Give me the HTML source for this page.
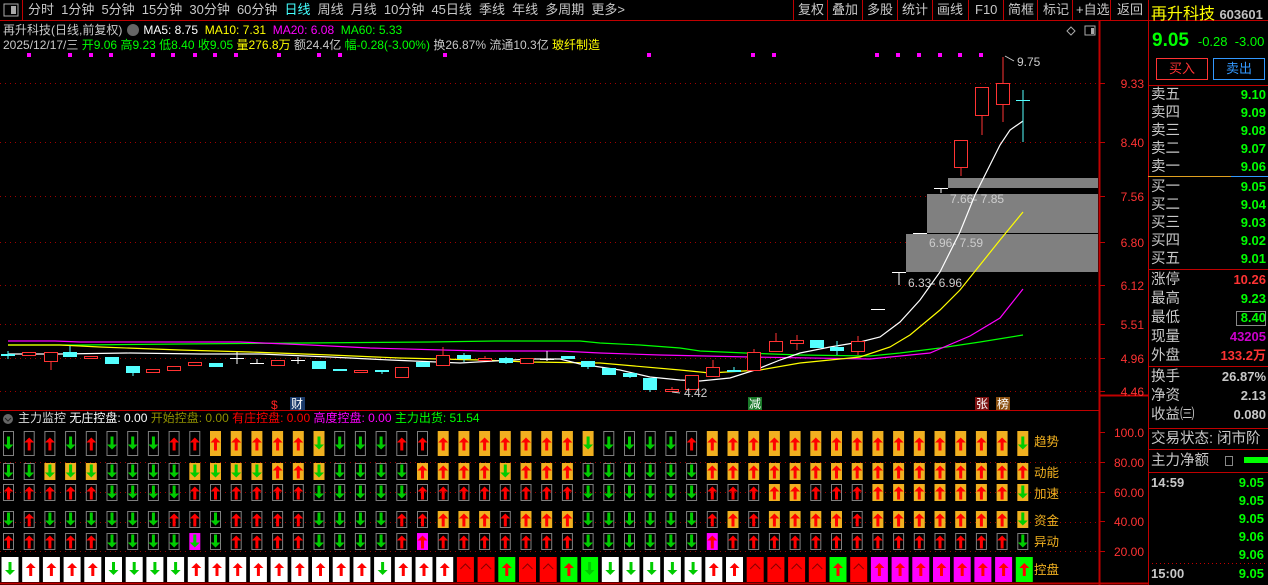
<!DOCTYPE html>
<html><head><meta charset="utf-8">
<style>
*{margin:0;padding:0;box-sizing:border-box}
body{width:1268px;height:585px;background:#000;overflow:hidden;font-family:"Liberation Sans","Noto Sans CJK SC",sans-serif;color:#c0c0c0;position:relative}
.t{position:absolute;white-space:nowrap;font-size:12px;line-height:14px}
.tb{position:absolute;top:0;height:20px;line-height:20px;font-size:13px;color:#c8c8c8;white-space:nowrap}
.rp{position:absolute;font-size:14.5px;line-height:18px;white-space:nowrap}
</style></head><body>
<svg id="s" width="1268" height="585" style="position:absolute;left:0;top:0"></svg>

<div class="tb" style="left:28px;word-spacing:3.5px">分时 1分钟 5分钟 15分钟 30分钟 60分钟 <span style="color:#4ff">日线</span> 周线 月线 10分钟 45日线 季线 年线 多周期 更多&gt;</div>
<div class="tb" style="left:798px">复权</div>
<div class="tb" style="left:832px">叠加</div>
<div class="tb" style="left:867px">多股</div>
<div class="tb" style="left:902px">统计</div>
<div class="tb" style="left:937px">画线</div>
<div class="tb" style="left:975px">F10</div>
<div class="tb" style="left:1008px">简框</div>
<div class="tb" style="left:1043px">标记</div>
<div class="tb" style="left:1076px">+自选</div>
<div class="tb" style="left:1117px">返回</div>

<div class="t" style="left:3px;top:23px;color:#c8c8c8">再升科技(日线,前复权)<span style="display:inline-block;width:12px;height:12px;border-radius:6px;background:#666;margin:0 4px 0 5px;vertical-align:-2px"></span><span style="color:#fff">MA5: 8.75</span>&nbsp; <span style="color:#ff0">MA10: 7.31</span>&nbsp; <span style="color:#f0f">MA20: 6.08</span>&nbsp; <span style="color:#0f0">MA60: 5.33</span></div>
<div class="t" style="left:3px;top:38px;color:#c8c8c8">2025/12/17/三 <span style="color:#0f0">开9.06</span> <span style="color:#0f0">高9.23</span> <span style="color:#0f0">低8.40</span> <span style="color:#0f0">收9.05</span> <span style="color:#ff0">量276.8万</span> 额24.4亿 <span style="color:#0f0">幅-0.28(-3.00%)</span> 换26.87% 流通10.3亿 <span style="color:#ff0">玻纤制造</span></div>

<div class="t" style="left:18px;top:411px;color:#ddd">主力监控 <span style="color:#fff">无庄控盘: 0.00</span> <span style="color:#909000">开始控盘: 0.00</span> <span style="color:#f00">有庄控盘: 0.00</span> <span style="color:#f0f">高度控盘: 0.00</span> <span style="color:#0f0">主力出货: 51.54</span></div>

<div class="rp" style="left:1151px;top:6px;font-size:16px;color:#ff0">再升科技 <span style="font-size:13px;color:#c0c0c0;font-weight:bold">603601</span></div>
<div class="rp" style="left:1152px;top:32px;font-size:19px;font-weight:bold;color:#0f0">9.05 <span style="font-size:13px;font-weight:normal">&nbsp;-0.28 &nbsp;-3.00</span></div>
<div style="position:absolute;left:1156px;top:58px;width:52px;height:22px;border:1px solid #f33;color:#f33;font-size:13px;text-align:center;line-height:20px">买入</div>
<div style="position:absolute;left:1213px;top:58px;width:52px;height:22px;border:1px solid #39f;color:#39f;font-size:13px;text-align:center;line-height:20px">卖出</div>
<div id="rp"></div>

<script>
const S=document.getElementById('s');let h='';
const L=(x1,y1,x2,y2,c,w,d)=>h+=`<line x1="${x1}" y1="${y1}" x2="${x2}" y2="${y2}" stroke="${c}" stroke-width="${w||1}" ${d?'stroke-dasharray="'+d+'"':''}/>`;
const R=(x,y,w,hh,f,s)=>h+=`<rect x="${x}" y="${y}" width="${w}" height="${hh}" fill="${f}" ${s?'stroke="'+s+'"':''}/>`;
const T=(x,y,t,c,fs,a)=>h+=`<text x="${x}" y="${y}" fill="${c}" font-size="${fs||12}" font-family="Liberation Sans,Noto Sans CJK SC,sans-serif" ${a?'text-anchor="'+a+'"':''}>${t}</text>`;
const red='#c00000';
L(0,20.5,1268,20.5,red);L(22.5,0,22.5,20,red);
[793,827,862,897,932,968,1003,1037,1072,1110].forEach(x=>L(x+.5,0,x+.5,20,red));
L(1099.5,20,1099.5,585,red,2);L(1148.5,0,1148.5,585,red);
L(0,410.5,1100,410.5,red);L(1100,395.5,1148,395.5,red,2);
L(0,583.5,1148,583.5,red,2);
[83,142,196,242,285,324,358,391].forEach(y=>{L(0,y+.5,1098,y+.5,'#a00000',1,'1 4');L(1100,y+.5,1105,y+.5,red)});
[['9.33',83],['8.40',142],['7.56',196],['6.80',242],['6.12',285],['5.51',324],['4.96',358],['4.46',391]].forEach(a=>T(1144,a[1]+5,a[0],'#f33',12,'end'));
[[100.0,432],[80,462],[60,492],[40,521],[20,551]].forEach(a=>{L(1100,a[1]+.5,1105,a[1]+.5,red);T(1144,a[1]+5,a[0]==100?'100.0':a[0]+'.00','#f33',12,'end')});
[462,492,522,551].forEach(y=>L(0,y+.5,1098,y+.5,'#a00000',1,'1 4'));
R(4,4,14,12,'none','#aaa');R(11,6,5,8,'#aaa');
h+=`<path d="M1071 27 l4 4 l-4 4 l-4 -4z" fill="none" stroke="#aaa"/>`;R(1085,26,10,9,'none','#aaa');R(1091,28,3,6,'#aaa');
[29,70,91,111,153,173,195,215,236,279,319,340,445,649,753,774,877,898,919,940,960,981].forEach(x=>R(x-2,53,4,4,'#f0f'));
R(948,178,150,10,'#808080');R(927,194,171,39,'#808080');R(906,234,192,38,'#808080');
L(906,233.5,1098,233.5,'#000');
T(950,203,'7.66- 7.85','#ccc',12);T(929,247,'6.96- 7.59','#ccc',12);T(908,287,'6.33- 6.96','#ccc',12);
const P=(pts,c)=>h+=`<polyline points="${pts}" fill="none" stroke="${c}" stroke-width="1.2"/>`;
P('8,345 80,345 180,344 430,342 495,341 580,341 600,343 640,345 680,348 700,351 745,353 800,355 870,356 900,353 940,348 980,342 1023,335','#0f0');
P('8,341 55,341 80,342 240,342 310,345 370,348 480,351 560,351 600,353 660,355 750,357 870,359 930,353 970,336 1000,318 1023,289','#f0f');
P('8,345 60,345 100,347 180,350 250,352 330,355 400,358 480,360 530,362 600,363 680,370 710,373 760,370 800,363 860,357 890,347 910,335 940,310 960,290 980,265 1000,240 1023,212','#ff0');
P('8,354 60,354 130,353 200,354 260,354 330,357 390,360 460,363 530,359 560,359 580,364 620,370 650,377 680,380 700,381 730,378 755,370 780,360 800,353 830,347 860,342 880,337 900,322 920,300 940,272 960,232 975,195 990,165 1000,145 1010,130 1023,121','#fff');
const C=[['c',8,354,354,351,359],['r',29,352,355,352,355],['r',51,352,361,352,370],['c',70,352,357,346,357],['r',91,356,358,356,358],['c',112,357,364,357,364],['c',133,366,373,366,376],['r',153,369,372,369,372],['r',174,366,370,366,370],['r',195,362,365,362,365],['c',216,363,367,363,367],['w',237,358,358,352,364],['w',257,363,363,359,364],['r',278,360,365,360,365],['w',298,360,360,357,364],['c',319,361,369,361,369],['c',340,369,371,369,371],['r',361,370,372,370,372],['c',382,370,372,370,374],['r',402,367,377,367,377],['c',423,362,367,362,367],['r',443,355,365,347,365],['c',464,355,359,353,362],['r',485,358,360,356,360],['c',506,358,363,357,364],['r',527,358,363,358,363],['w',547,359,359,351,361],['c',568,356,359,356,359],['c',588,361,367,361,369],['c',609,368,375,368,375],['c',630,373,377,373,378],['c',650,378,390,378,392],['r',672,389,391,387,391],['r',692,375,389,375,389],['r',713,367,376,360,376],['c',734,370,371,367,371],['r',754,352,370,349,370],['r',776,341,351,333,351],['r',797,340,343,335,350],['c',817,340,348,340,348],['c',837,347,351,341,355],['r',858,341,351,336,355],['w',878,309,309,309,309],['w',899,272,272,272,285],['w',920,233,233,233,233],['w',941,188,188,188,193],['r',961,140,167,140,176],['r',982,87,115,87,135],['r',1003,83,104,57,122],['q',1023,100,100,90,142]];
C.forEach(([t,x,a,b,hi,lo])=>{
 if(t=='r'){L(x,hi,x,a,'#f33');L(x,b,x,lo,'#f33');R(x-6.5,a+.5,13,Math.max(b-a,1),'#000','#f33');}
 else if(t=='c'){L(x,hi,x,lo,'#54ffff');R(x-7,a,14,Math.max(b-a,2),'#54ffff');}
 else if(t=='q'){L(x,hi,x,lo,'#54ffff');L(x-7,a+.5,x+7,a+.5,'#54ffff');}
 else {L(x,hi,x,lo,'#fff');L(x-7,a+.5,x+7,a+.5,'#fff');}
});
L(672,392,680,393,'#ccc');T(684,397,'4.42','#ccc',12);
L(1005,56,1014,61,'#ccc');T(1017,66,'9.75','#ccc',12);
T(271,409,'$','#f22',12);R(290,397,15,13,'#1a3a6a');T(291,408,'财','#fff',12);
R(748,397,14,13,'#1a7a2a');T(749,408,'减','#fff',12);
R(975,397,14,13,'#7a1010');T(976,408,'张','#fff',12);R(996,397,14,13,'#8a5010');T(997,408,'榜','#fff',12);
h+=`<circle cx="8" cy="419" r="5" fill="#666"/><path d="M5 418 l3 3 l3 -3" stroke="#222" fill="none"/>`;
const rs=[['duududdduu'+'UUUUUDdddu'+'uUUUUUUUDd'+'ddduUUUUUU'+'UUUUUUUUUD',431,25],
['ddDDDddddD'+'DDDUUDdddd'+'UUUUDUUUdd'+'ddddUUUUUU'+'UUUUUUUUUU',463,17],
['uuuuuddddu'+'uuuuuddddd'+'uuuuuuuudd'+'dddduuuUUu'+'uuUUUUUUUD',484,17],
['dudddddduu'+'duuuuddddu'+'uUUUuUUUdd'+'dddduUuUUU'+'UuUUUUUUUD',511,17],
['uuuuuddddN'+'duuuuddddu'+'Muuuuuuudd'+'ddddMuuuuu'+'uuuuuuuuud',533,17]];
const up=(cx,cy)=>h+=`<path d="M${cx} ${cy-6} l5 5 h-3.5 v8 h-3 v-8 h-3.5z" fill="#f00"/>`;
const dn=(cx,cy)=>h+=`<path d="M${cx} ${cy+6} l5 -5 h-3.5 v-8 h-3 v8 h-3.5z" fill="#0c0"/>`;
rs.forEach(([s,y,hh])=>{for(let i=0;i<50;i++){const c=s[i],cx=8.5+i*20.7,cy=y+hh/2;
 if(c=='U'||c=='D')R(cx-5.5,y,11,hh,'#f0b020');else if(c=='M'||c=='N')R(cx-5.5,y,11,hh,'#f0f');else R(cx-5,y+.5,10,hh-1,'none','#808080');
 if('uUM'.includes(c))up(cx,cy);else dn(cx,cy);}});
const r6='xwwwwxxxxw'+'wwwwwwwwxw'+'wwRRGRRGHx'+'xxxxwwRRRR'+'GRPPPPPPPG';
for(let i=0;i<50;i++){const c=r6[i],cx=10+i*20.7,y=557,cy=569;
 const f={x:'#fff',w:'#fff',R:'#f00',G:'#0f0',H:'#0f0',P:'#f0f'}[c];R(cx-8.5,y,17,25,f);
 if(c=='R')h+=`<path d="M${cx-5} ${cy} l5 -5 l5 5" stroke="#800" fill="none"/>`;
 else if(c=='x'||c=='H')dn(cx,cy);else up(cx,cy);}
[['趋势',446],['动能',477],['加速',498],['资金',525],['异动',546],['控盘',574]].forEach(a=>T(1034,a[1],a[0],'#f0b020',12.5));
[85,269,366,428,449,472].forEach(y=>L(1148,y+.5,1268,y+.5,red));
L(1148,176.5,1231,176.5,'#e0a020');L(1231,176.5,1268,176.5,'#39f');
L(1148,563.5,1268,563.5,red,1,'1 3');
S.innerHTML=h;
let r='';const rp=(x,y,t,c,st)=>r+=`<div class="rp" style="left:${x}px;top:${y}px;color:${c};${st||''}">${t}</div>`;
const ob=[['卖五','9.10',86],['卖四','9.09',104],['卖三','9.08',122],['卖二','9.07',140],['卖一','9.06',158],['买一','9.05',178],['买二','9.04',196],['买三','9.03',214],['买四','9.02',232],['买五','9.01',250]];
ob.forEach(a=>{rp(1151,a[2],a[0],'#c8c8c8');rp(1200,a[2],a[1],'#0f0','width:66px;text-align:right;font-weight:bold;font-size:13px')});
[['涨停','10.26','#f33',271],['最高','9.23','#0f0',290],['最低','8.40','#0f0',309],['现量','43205','#c0c',328],['外盘','133.2万','#f33',347],['换手','26.87%','#c8c8c8',368],['净资','2.13','#c8c8c8',387],['收益㈢','0.080','#c8c8c8',406]].forEach(a=>{rp(1151,a[3],a[0],'#c8c8c8');rp(1190,a[3],a[1],a[2],'width:76px;text-align:right;font-weight:bold;font-size:13px')});
rp(1151,430,'交易状态: 闭市阶','#c8c8c8');rp(1151,452,'主力净额','#c8c8c8');
r+='<div style="position:absolute;left:1225px;top:456px;width:8px;height:10px;border:1px solid #888"></div><div style="position:absolute;left:1244px;top:457px;width:24px;height:6px;background:#0f0"></div>';
r+='<div style="position:absolute;left:1236px;top:311px;width:30px;height:15px;border:1px solid #888"></div>';
rp(1151,474,'14:59','#c8c8c8','font-weight:bold;font-size:13px');rp(1151,565,'15:00','#c8c8c8','font-weight:bold;font-size:13px');
[474,492,510,528,546,565].forEach((y,i)=>rp(1200,y,['9.05','9.05','9.05','9.06','9.06','9.05'][i],'#0f0','width:64px;text-align:right;font-weight:bold;font-size:13px'));
document.getElementById('rp').innerHTML=r;
</script>
</body></html>
